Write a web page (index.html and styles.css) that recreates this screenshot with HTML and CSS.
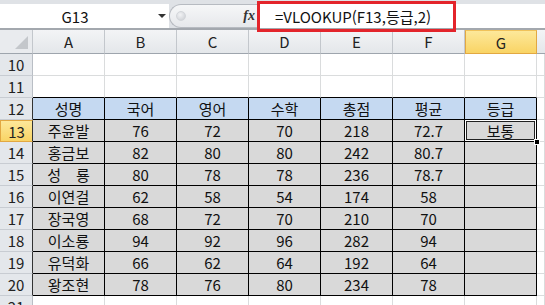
FILE: index.html
```html
<!DOCTYPE html>
<html lang="ko">
<head>
    <meta charset="UTF-8">
    <title>성적표 - 등급</title>
    <link rel="stylesheet" href="styles.css">
</head>
<body>
    <div class="app">
        <div class="formula-bar">
            <div class="name-box">
                <span class="name">G13</span>
                <span class="arrow"></span>
            </div>
            <div class="fx-area">
                <span class="knob"></span>
                <span class="fx">fx</span>
            </div>
            <div class="formula">=VLOOKUP(F13,등급,2)</div>
            <div class="highlight"></div>
        </div>

        <div class="sheet">
            <div class="corner"><span class="tri"></span></div>
            <div class="ch">A</div>
            <div class="ch">B</div>
            <div class="ch">C</div>
            <div class="ch">D</div>
            <div class="ch">E</div>
            <div class="ch">F</div>
            <div class="ch active">G</div>
            <div class="ch rest"></div>

            <div class="rh">10</div>
            <div class="c"></div><div class="c"></div><div class="c"></div><div class="c"></div><div class="c"></div><div class="c"></div><div class="c"></div><div class="c"></div>

            <div class="rh">11</div>
            <div class="c above"></div><div class="c above"></div><div class="c above"></div><div class="c above"></div><div class="c above"></div><div class="c above"></div><div class="c above"></div><div class="c"></div>

            <div class="rh edge">12</div>
            <div class="c th">성명</div><div class="c th">국어</div><div class="c th">영어</div><div class="c th">수학</div><div class="c th">총점</div><div class="c th">평균</div><div class="c th">등급</div><div class="c"></div>

            <div class="rh edge active">13</div>
            <div class="c td">주윤발</div><div class="c td">76</div><div class="c td">72</div><div class="c td">70</div><div class="c td">218</div><div class="c td">72.7</div><div class="c td selected">보통<span class="handle"></span></div><div class="c"></div>

            <div class="rh edge">14</div>
            <div class="c td">홍금보</div><div class="c td">82</div><div class="c td">80</div><div class="c td">80</div><div class="c td">242</div><div class="c td">80.7</div><div class="c td"></div><div class="c"></div>

            <div class="rh edge">15</div>
            <div class="c td">성　룡</div><div class="c td">80</div><div class="c td">78</div><div class="c td">78</div><div class="c td">236</div><div class="c td">78.7</div><div class="c td"></div><div class="c"></div>

            <div class="rh edge">16</div>
            <div class="c td">이연걸</div><div class="c td">62</div><div class="c td">58</div><div class="c td">54</div><div class="c td">174</div><div class="c td">58</div><div class="c td"></div><div class="c"></div>

            <div class="rh edge">17</div>
            <div class="c td">장국영</div><div class="c td">68</div><div class="c td">72</div><div class="c td">70</div><div class="c td">210</div><div class="c td">70</div><div class="c td"></div><div class="c"></div>

            <div class="rh edge">18</div>
            <div class="c td">이소룡</div><div class="c td">94</div><div class="c td">92</div><div class="c td">96</div><div class="c td">282</div><div class="c td">94</div><div class="c td"></div><div class="c"></div>

            <div class="rh edge">19</div>
            <div class="c td">유덕화</div><div class="c td">66</div><div class="c td">62</div><div class="c td">64</div><div class="c td">192</div><div class="c td">64</div><div class="c td"></div><div class="c"></div>

            <div class="rh edge">20</div>
            <div class="c td">왕조현</div><div class="c td">78</div><div class="c td">76</div><div class="c td">80</div><div class="c td">234</div><div class="c td">78</div><div class="c td"></div><div class="c"></div>

            <div class="rh">21</div>
            <div class="c"></div><div class="c"></div><div class="c"></div><div class="c"></div><div class="c"></div><div class="c"></div><div class="c"></div><div class="c"></div>
        </div>
    </div>
</body>
</html>
```

FILE: styles.css
```css
* {
    margin: 0;
    padding: 0;
    box-sizing: border-box;
}

body {
    font-family: "Noto Sans CJK KR", "Noto Sans", sans-serif;
    font-size: 15px;
    color: #111;
    background: #fff;
    width: 545px;
    height: 305px;
    overflow: hidden;
}

.app {
    position: relative;
}

/* formula bar */

.formula-bar {
    display: flex;
    height: 30px;
    padding-top: 4px;
    background: #dfe2e6;
    border-bottom: 2px solid #a3a8ae;
}

.name-box {
    display: flex;
    align-items: center;
    width: 169px;
    background: #fff;
}

.name {
    width: 150px;
    text-align: center;
}

.arrow {
    width: 0;
    height: 0;
    margin-left: 8px;
    border-left: 4px solid transparent;
    border-right: 4px solid transparent;
    border-top: 4px solid #333;
}

.fx-area {
    display: flex;
    align-items: center;
    width: 88px;
    background: linear-gradient(#f6f7f8, #e6e8eb);
    border: 1px solid #b7bbc1;
    border-right: none;
    border-radius: 12px 0 0 12px;
}

.knob {
    width: 10px;
    height: 10px;
    margin-left: 6px;
    border-radius: 50%;
    background: radial-gradient(circle at 40% 35%, #f2f3f5, #c9ccd1);
    border: 1px solid #d3d6da;
}

.fx {
    margin-left: auto;
    margin-right: 2px;
    font-family: "Liberation Serif", serif;
    font-style: italic;
    font-weight: bold;
    font-size: 14px;
    color: #333;
}

.formula {
    flex-grow: 1;
    display: flex;
    align-items: center;
    padding-left: 17px;
    background: #fff;
    border-left: 1px solid #c9ccd0;
}

.highlight {
    position: absolute;
    left: 257px;
    top: 1px;
    width: 199px;
    height: 31px;
    border: 3px solid #e3242b;
}

/* sheet grid */

.sheet {
    display: grid;
    grid-template-columns: 33px repeat(7, 72px) 1fr;
    grid-template-rows: 24px;
    grid-auto-rows: 22px;
}

.corner {
    position: relative;
    background: #e9ebee;
    border-right: 1px solid #c3c7cc;
    border-bottom: 1px solid #9ea5ad;
}

.tri {
    position: absolute;
    right: 4px;
    bottom: 4px;
    width: 0;
    height: 0;
    border-left: 13px solid transparent;
    border-bottom: 13px solid #c4c7cb;
}

.ch {
    display: flex;
    align-items: center;
    justify-content: center;
    background: linear-gradient(#f3f4f6, #e4e7ea);
    border-right: 1px solid #c3c7cc;
    border-bottom: 1px solid #9ea5ad;
    color: #222;
}

.ch.rest {
    border-right: none;
}

.ch.active {
    background: linear-gradient(#fde89a, #f9d465);
    border: 1px solid #e2a842;
    border-top-color: #f0c25a;
}

.rh {
    display: flex;
    align-items: center;
    justify-content: center;
    background: #e4e7eb;
    border-right: 1px solid #b9bec5;
    border-bottom: 1px solid #c8ccd2;
    color: #222;
}

.rh.edge {
    border-right-color: #333;
}

.rh.active {
    background: linear-gradient(#fde89a, #f9d465);
    border: 1px solid #e2a842;
    border-right-color: #333;
}

.c {
    display: flex;
    align-items: center;
    justify-content: center;
    border-right: 1px solid #dadcdd;
    border-bottom: 1px solid #dadcdd;
}

.c.above {
    border-bottom-color: #000;
}

.th {
    background: #c5d9f1;
    border-right-color: #000;
    border-bottom-color: #000;
}

.td {
    background: #d9d9d9;
    border-right-color: #000;
    border-bottom-color: #000;
}

.selected {
    position: relative;
    box-shadow: inset 0 0 0 1px #fff, inset 0 0 0 2px #222;
}

.handle {
    position: absolute;
    right: -4px;
    bottom: -4px;
    width: 6px;
    height: 6px;
    background: #000;
    border: 1px solid #fff;
}
```
